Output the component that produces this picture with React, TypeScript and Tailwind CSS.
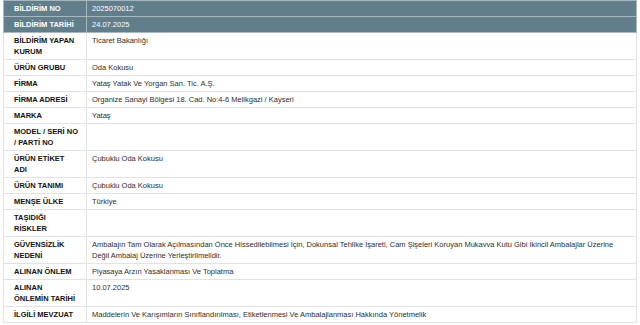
import React from "react";

type Row = { label: string[]; value: string[]; header?: boolean };

const rows: Row[] = [
  { label: ["BİLDİRİM NO"], value: ["2025070012"], header: true },
  { label: ["BİLDİRİM TARİHİ"], value: ["24.07.2025"], header: true },
  { label: ["BİLDİRİM YAPAN", "KURUM"], value: ["Ticaret Bakanlığı"] },
  { label: ["ÜRÜN GRUBU"], value: ["Oda Kokusu"] },
  { label: ["FİRMA"], value: ["Yataş Yatak Ve Yorgan San. Tic. A.Ş."] },
  { label: ["FİRMA ADRESİ"], value: ["Organize Sanayi Bölgesi 18. Cad. No:4-6 Melikgazi / Kayseri"] },
  { label: ["MARKA"], value: ["Yataş"] },
  { label: ["MODEL / SERİ NO", "/ PARTİ NO"], value: [] },
  { label: ["ÜRÜN ETİKET", "ADI"], value: ["Çubuklu Oda Kokusu"] },
  { label: ["ÜRÜN TANIMI"], value: ["Çubuklu Oda Kokusu"] },
  { label: ["MENŞE ÜLKE"], value: ["Türkiye"] },
  { label: ["TAŞIDIĞI", "RİSKLER"], value: [] },
  {
    label: ["GÜVENSİZLİK", "NEDENİ"],
    value: [
      "Ambalajın Tam Olarak Açılmasından Önce Hissedilebilmesi İçin, Dokunsal Tehlike İşareti, Cam Şişeleri Koruyan Mukavva Kutu Gibi İkincil Ambalajlar Üzerine",
      "Değil Ambalaj Üzerine Yerleştirilmelidir.",
    ],
  },
  { label: ["ALINAN ÖNLEM"], value: ["Piyasaya Arzın Yasaklanması Ve Toplatma"] },
  { label: ["ALINAN", "ÖNLEMİN TARİHİ"], value: ["10.07.2025"] },
  {
    label: ["İLGİLİ MEVZUAT"],
    value: ["Maddelerin Ve Karışımların Sınıflandırılması, Etiketlenmesi Ve Ambalajlanması Hakkında Yönetmelik"],
  },
];

function Lines({ lines }: { lines: string[] }) {
  return (
    <>
      {lines.map((l, i) => (
        <div key={i} className="whitespace-nowrap">
          {l}
        </div>
      ))}
    </>
  );
}

export default function App() {
  return (
    <div
      className="w-[640px] h-[325px] bg-white overflow-hidden pl-[3px] pr-[3px]"
      style={{ fontFamily: '"Liberation Sans", Arial, sans-serif' }}
    >
      <table className="w-[634px] border-collapse table-fixed text-[7.5px] leading-[11px]">
        <colgroup>
          <col className="w-[83px]" />
          <col />
        </colgroup>
        <tbody>
          {rows.map((r, i) =>
            r.header ? (
              <tr key={i} className="bg-[#627e8b] text-white">
                <td className="border border-[#a7b7bf] pl-[10px] pr-[4px] py-[2px] align-top font-bold">
                  <Lines lines={r.label} />
                </td>
                <td className="border border-[#a7b7bf] pl-[5px] pr-[5px] py-[2px] align-top">
                  <Lines lines={r.value} />
                </td>
              </tr>
            ) : (
              <tr key={i}>
                <td className="border border-[#e2e2e2] pl-[10px] pr-[4px] py-[2px] align-top font-bold text-[#111111]">
                  <Lines lines={r.label} />
                </td>
                <td className="border border-[#e2e2e2] pl-[5px] pr-[5px] py-[2px] align-top text-[#2e2e2e]">
                  <Lines lines={r.value} />
                </td>
              </tr>
            )
          )}
        </tbody>
      </table>
    </div>
  );
}
